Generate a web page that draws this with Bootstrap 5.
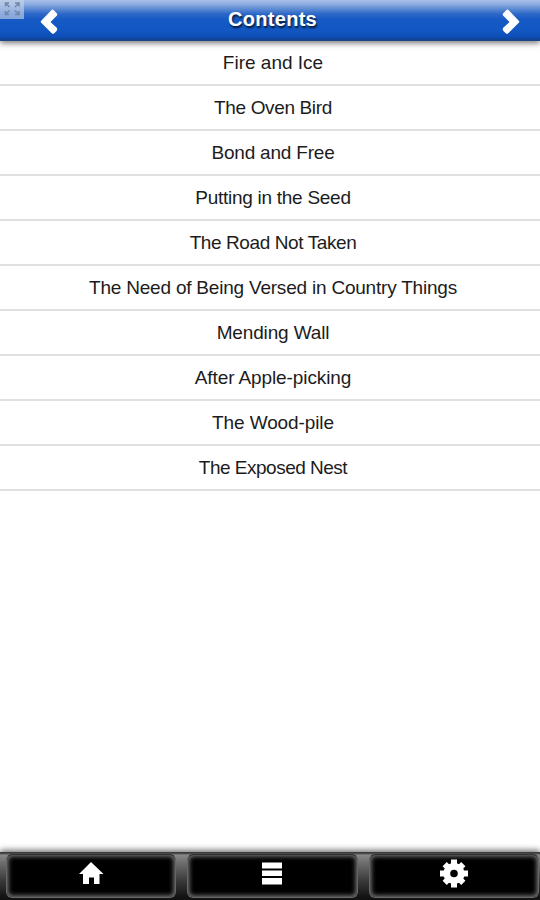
<!DOCTYPE html>
<html lang="en">
<head>
<meta charset="utf-8">
<meta name="viewport" content="width=device-width, initial-scale=1">
<title>Contents</title>
<link href="https://cdn.jsdelivr.net/npm/bootstrap@5.3.0/dist/css/bootstrap.min.css" rel="stylesheet">
<style>
body{font-family:"Liberation Sans",Arial,sans-serif;background:#fff;color:#111;overflow:hidden}
.topbar{height:41px;background:linear-gradient(#a9c0e8 0,#8eaee0 4px,#5c8ad3 9px,#2c67c8 14px,#1559c5 20px,#1257c3 30px,#0d4db5 37px,#11428f 40px,#2b4a7c 41px);box-shadow:0 2px 6px rgba(0,0,0,.55);padding:0 20px 0 39px;z-index:2}
.topbar h1{font-size:20px;line-height:39px;text-shadow:1px 2px 2px rgba(0,0,0,.75);letter-spacing:.3px;margin:0 14px 2px 0}
.expander{left:0;top:0;width:24px;height:19px;background:rgba(200,211,232,.62)}
.poem{height:45px;font-size:19px;line-height:44px;border-bottom:2px solid #e0e0e0;color:#1c1c1c;padding-left:6px}
.poem:nth-child(2){letter-spacing:-.36px}
.poem:nth-child(3){letter-spacing:-.2px}
.poem:nth-child(4){letter-spacing:-.27px}
.poem:nth-child(5){letter-spacing:-.4px}
.poem:nth-child(6){letter-spacing:-.21px}
.poem:nth-child(7){letter-spacing:-.15px}
.poem:nth-child(8){letter-spacing:-.1px}
.poem:nth-child(9){letter-spacing:-.1px}
.poem:nth-child(10){letter-spacing:-.5px}
.bottombar{height:48px;background:linear-gradient(#444 0,#333 1px,#888 3px,#707070 10px,#3c3c3c 28px,#151515 44px,#111 100%);box-shadow:0 -2px 6px rgba(0,0,0,.55);padding:2px 1px 2px 6px;gap:11px}
.tab{height:44px;background:#000;border:1px solid #666;border-top-color:#333;border-radius:6px;box-shadow:inset 0 0 5px 1px #888;padding:0}
</style>
</head>
<body class="d-flex flex-column vh-100">
<header class="topbar position-relative d-flex align-items-center justify-content-between flex-shrink-0">
  <svg class="expander position-absolute" viewBox="0 0 24 19"><g stroke="#7086ab" stroke-width="1.5" fill="none"><path d="M5.500 6.500V3H9M6 3.500L9.500 7M15 3H19V6.500M18.500 3.500L15 7M5.500 11V14.500H9M6 14L9.500 10.500M15 14.500H19V11M18.500 14L15 10.500"/></g></svg>
  <svg width="19" height="27" viewBox="0 0 19 27"><path d="M14 2.500L18 6.500Q18.500 7.500 18 8.500L11.500 15L18 21Q18.500 22.500 18 23.500L15 26.500Q14 27 13 26.500L2 15.500Q1.300 14.700 2 14L13 2.500Z" fill="#fff"/></svg>
  <h1 class="fw-bold text-white">Contents</h1>
  <svg width="19" height="27" viewBox="0 0 19 27"><path d="M6 2.500L2 6.500Q1.500 7.500 2 8.500L8.500 15L2 21Q1.500 22.500 2 23.500L5 26.500Q6 27 7 26.500L18 15.500Q18.700 14.700 18 14L7 2.500Z" fill="#fff"/></svg>
</header>
<main class="flex-grow-1">
  <ul class="list-unstyled m-0 text-center">
    <li class="poem">Fire and Ice</li>
    <li class="poem">The Oven Bird</li>
    <li class="poem">Bond and Free</li>
    <li class="poem">Putting in the Seed</li>
    <li class="poem">The Road Not Taken</li>
    <li class="poem">The Need of Being Versed in Country Things</li>
    <li class="poem">Mending Wall</li>
    <li class="poem">After Apple-picking</li>
    <li class="poem">The Wood-pile</li>
    <li class="poem">The Exposed Nest</li>
  </ul>
</main>
<nav class="bottombar d-flex flex-shrink-0">
  <button class="tab flex-fill d-flex justify-content-center w-100" aria-label="Home"><svg width="28" height="38" viewBox="0 0 28 38"><path d="M14 7L26.500 19H22.500V29H17V22.500H12V29H6V19H2Z" fill="#fff"/></svg></button>
  <button class="tab flex-fill d-flex justify-content-center w-100" aria-label="Contents"><svg width="28" height="38" viewBox="0 0 28 38"><path d="M4 7.500h20v6H4zM4 15.500h20v5.500H4zM4 23h20v6.500H4z" fill="#fff"/></svg></button>
  <button class="tab flex-fill d-flex justify-content-center w-100" aria-label="Settings"><svg width="28" height="38" viewBox="0 0 28 38"><g transform="translate(14 18.500)"><circle r="7.200" fill="none" stroke="#fff" stroke-width="6.800"/><g stroke="#fff" stroke-width="6"><path d="M0-9V-14M0 9V14M-9 0H-14M9 0H14M-6.400-6.400L-9.300-9.300M6.400 6.400L9.300 9.300M-6.400 6.400L-9.300 9.300M6.400-6.400L9.300-9.300"/></g></g></svg></button>
</nav>
<script src="https://cdn.jsdelivr.net/npm/bootstrap@5.3.0/dist/js/bootstrap.bundle.min.js"></script>
</body>
</html>
